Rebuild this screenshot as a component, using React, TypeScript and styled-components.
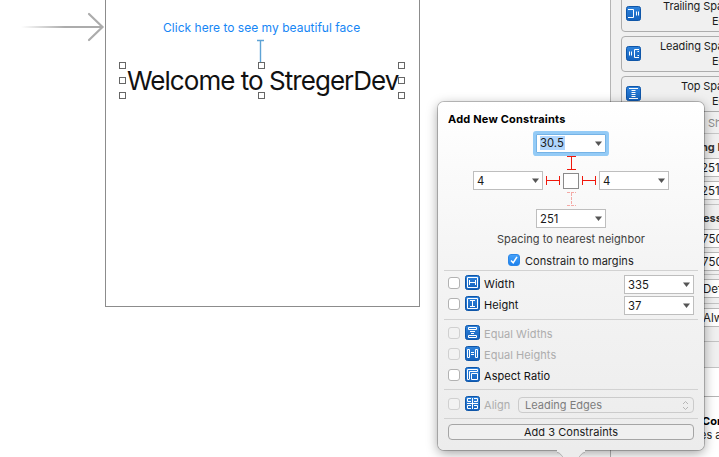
import React from 'react';
import styled, { createGlobalStyle, css } from 'styled-components';

const Global = createGlobalStyle`
  *, *::before, *::after { box-sizing: border-box; }
  body { margin: 0; background: #fff; font-family: Inter, "Liberation Sans", sans-serif; font-size: 11px; color: #1c1c1c; overflow: hidden; }
`;

const Window = styled.div`
  position: relative;
  display: grid;
  grid-template-columns: 610px 109px;
  width: 719px;
  height: 457px;
  overflow: hidden;
  background: #fff;
`;

/* ---------- interface builder canvas ---------- */
const Canvas = styled.main`
  position: relative;
`;
const Scene = styled.section`
  position: absolute;
  left: 105px;
  top: -2px;
  width: 315px;
  height: 309px;
  border: 1px solid #8c8c8c;
`;
const EntryArrow = styled.svg`
  position: absolute;
  left: 20px;
  top: 10px;
`;
const LinkLabel = styled.span`
  position: absolute;
  left: 163px;
  top: 19px;
  line-height: 17px;
  font-size: 12px;
  letter-spacing: 0.02px;
  white-space: nowrap;
  color: #1686f5;
`;
const Headline = styled.h1`
  position: absolute;
  left: 127px;
  top: 64px;
  margin: 0;
  line-height: 34px;
  font-size: 26px;
  font-weight: 400;
  letter-spacing: -0.96px;
  white-space: nowrap;
  color: #111;
`;
const Overlay = styled.svg`
  position: absolute;
  left: 110px;
  top: 36px;
`;

/* ---------- inspector ---------- */
const Inspector = styled.aside`
  display: flex;
  flex-direction: column;
  border-left: 1px solid #b4b4b4;
  background: #fff;
  overflow: hidden;
`;
const Cards = styled.div`
  flex: none;
  height: 134px;
  padding-left: 10px;
  background: #f0f0f0;
  border-bottom: 1px solid #c6c6c6;
`;
const Card = styled.div<{ $first?: boolean }>`
  display: flex;
  width: 130px;
  height: ${p => (p.$first ? 40 : 36)}px;
  margin-top: ${p => (p.$first ? -8 : 4)}px;
  padding: ${p => (p.$first ? 13 : 9)}px 0 0 4px;
  border: 1px solid #adadad;
  border-radius: 4px;
`;
const CardText = styled.div`
  flex: 1;
  margin-top: -7px;
  line-height: 15px;
  white-space: nowrap;
`;
const CardTitle = styled.div<{ $start: number }>`
  margin-left: ${p => p.$start}px;
  letter-spacing: -0.1px;
`;
const CardSub = styled.div`
  margin-left: 71px;
`;
const ShowNote = styled.div`
  margin: 3px 0 0 87px;
  line-height: 16px;
  color: #8b8b8b;
  white-space: nowrap;
`;
const Group = styled.div<{ $h: number }>`
  flex: none;
  height: ${p => p.$h}px;
  padding-left: 80px;
  background: #f0f0f0;
  border-bottom: 1px solid #c3c3c3;
  overflow: hidden;
`;
const GroupTitle = styled.div<{ $x: number }>`
  height: 24px;
  line-height: 27px;
  margin-left: ${p => p.$x}px;
  font-weight: 700;
  white-space: nowrap;
  color: #333;
`;
const Field = styled.div<{ $top?: number; $pad: number }>`
  height: 19px;
  width: 80px;
  margin-top: ${p => p.$top ?? 0}px;
  padding-left: ${p => p.$pad}px;
  line-height: 18px;
  font-size: 11.5px;
  background: #fff;
  border: 1px solid #b9b9b9;
  white-space: nowrap;
`;
const Library = styled.div`
  flex: 1;
  padding: 17px 0 0 89px;
  line-height: 14px;
  white-space: nowrap;
`;
const LibraryTabs = styled.div`
  flex: none;
  height: 29px;
  border-bottom: 1px solid #b4b4b4;
`;
const Bold = styled.div`
  margin-left: 2px;
  font-weight: 700;
  color: #000;
`;

/* ---------- popover ---------- */
const Popover = styled.div`
  position: absolute;
  left: 438px;
  top: 102px;
  width: 266px;
  height: 348px;
  padding: 9px 6px 0;
  border-radius: 6px;
  background: linear-gradient(#fff 0, #fbfbfb 18%, #f4f4f4 48%, #ececec 100%);
  box-shadow: 0 0 0 1px rgba(0, 0, 0, 0.22), 0 3px 12px rgba(0, 0, 0, 0.38);
`;
const Tail = styled.svg`
  position: absolute;
  left: 119px;
  top: 347px;
`;
const Title = styled.div`
  height: 21px;
  padding-left: 4px;
  line-height: 17px;
  font-weight: 700;
  letter-spacing: 0.2px;
  color: #000;
`;
const Spacing = styled.div`
  display: grid;
  grid-template-columns: 70px 20px 16px 20px 70px;
  grid-template-rows: 22px 17px 19px 18px 21px;
  justify-content: center;
  align-items: center;
  justify-items: center;
  height: 99px;
`;
const Middle = styled.div`
  grid-column: 1 / -1;
  display: flex;
  justify-content: center;
`;
const Combo = styled.div<{ $focus?: boolean }>`
  display: flex;
  flex: none;
  align-items: center;
  justify-content: space-between;
  width: 70px;
  height: 19px;
  padding: 0 3px;
  border: 1px solid #bebebe;
  background: #fff;
  font-size: 11.3px;
  color: #1a1a1a;
  ${p => p.$focus && css`
    border-color: #75b3e6;
    box-shadow: 0 0 0 3px #94cbf6;
    border-radius: 1px;
  `}
`;
const Value = styled.span<{ $selected?: boolean }>`
  line-height: 14px;
  padding-right: 1px;
  background: ${p => (p.$selected ? '#b0d5fc' : 'transparent')};
`;
const Caption = styled.div`
  height: 20px;
  line-height: 16px;
  text-align: center;
  letter-spacing: 0.04px;
  color: #3f3f3f;
`;
const MarginRow = styled.div`
  display: flex;
  align-items: center;
  gap: 5px;
  height: 19px;
  padding-left: 64px;
`;
const Box = styled.span<{ $dim?: boolean; $on?: boolean }>`
  display: flex;
  flex: none;
  width: 12px;
  height: 12px;
  margin-top: ${p => (p.$on ? -1 : 1)}px;
  border: 1px solid ${p => (p.$on ? '#2b87e8' : p.$dim ? '#d0d0d0' : '#b2b2b2')};
  border-radius: 3px;
  background: ${p => (p.$on ? 'linear-gradient(#45a0f8, #1e82ed)' : p.$dim ? '#f2f2f2' : '#fff')};
`;
const Section = styled.div<{ $h: number; $top: number }>`
  height: ${p => p.$h}px;
  padding: ${p => p.$top}px 4px 0;
  border-top: 1px solid #d2d2d2;
`;
const Label = styled.span`
  flex: 1;
  letter-spacing: 0.05px;
  white-space: nowrap;
`;
const Row = styled.div<{ $dim?: boolean }>`
  display: flex;
  align-items: center;
  height: 21px;
  color: ${p => (p.$dim ? '#adadad' : '#111')};

  ${Label} { margin-top: 3px; }
  ${Combo} { margin-top: 4px; }
`;
const RowIcon = styled.svg`
  flex: none;
  width: 15px;
  height: 15px;
  margin: 0 4px 0 5px;
`;
const CardIcon = styled.svg`
  flex: none;
  width: 15px;
  height: 15px;
`;
const Select = styled.div`
  display: flex;
  align-items: center;
  justify-content: space-between;
  width: 176px;
  height: 16px;
  margin-top: 3px;
  padding: 0 4px 0 6px;
  border: 1px solid #cbcbcb;
  border-radius: 4px;
  color: #7d7d7d;
`;
const AddButton = styled.button`
  display: block;
  width: 246px;
  height: 16px;
  padding: 0;
  border: 1px solid #a5a5a5;
  border-radius: 4px;
  background: #f0f0f0;
  font: inherit;
  line-height: 14px;
  letter-spacing: 0.05px;
  color: #1a1a1a;
`;

const glyphs = {
  width: <path d="M2.5 2.5h10v10h-10zM4.5 5v5M10.5 5v5M4.5 7.5h6" />,
  height: <path d="M2.5 2.5h10v10h-10zM5 4.5h5M5 10.5h5M7.5 4.5v6" />,
  equalWidths: <path d="M3.5 2.5h8v2h-8zM3.5 10.5h8v2h-8zM5 6.5h5M6 8.5h3" />,
  equalHeights: <path d="M2.5 3.500h2v8h-2zM10.500 3.500h2v8h-2zM6 6.500h3M6 8.500h3" />,
  aspect: <path d="M12.500 4.500v-2h-10v10h2M6.500 6.500h6v6h-6zM4.500 12v-7.500h8" />,
  align: <path d="M7.500 2v11M2 7.500h11M6 2.500h-3.500v3h3.500M6 9.500h-3.500v3h3.500M9 2.500h3.500v3h-3.500M9 9.500h3.500v3h-3.500" />,
  trailing: <path d="M2 3.5h5.5v8H2M10.5 5.5v4M12.5 5.5v4" />,
  leading: <path d="M13 3.5H8.5v8H13M11.5 5.5h1.500M11.500 9.500h1.500M3.500 5.500v4M5.500 5.500v4" />,
  top: <path d="M3 2.5h9M3 12.5h9M5.5 4.5h4M5.5 6.5h4M5.5 8.5h4M5.5 10.5h4" />,
};
type GlyphName = keyof typeof glyphs;

const Glyph = ({ name }: { name: GlyphName }) => (
  <>
    <defs>
      <linearGradient id={`blue-${name}`} x2="0" y2="1">
        <stop stopColor="#2f83dc" />
        <stop offset="1" stopColor="#1462bd" />
      </linearGradient>
    </defs>
    <rect x=".5" y=".5" width="14" height="14" rx="2" fill={`url(#blue-${name})`} stroke="#0f56a8" />
    <g fill="none" stroke="#fff" strokeWidth="1">{glyphs[name]}</g>
  </>
);

const ComboBox = ({ value, focus }: { value: string; focus?: boolean }) => (
  <Combo $focus={focus}>
    <Value $selected={focus}>{value}</Value>
    <svg width="7" height="5"><path d="M0 .5h7L3.5 5z" fill="#555" /></svg>
  </Combo>
);

const VerticalStrut = ({ dashed }: { dashed?: boolean }) => (
  <svg width="9" height="14">
    <path d="M0 .5h9M0 13.5h9M4.5 1v12" stroke={dashed ? '#f4aaa6' : '#f0180c'} strokeDasharray={dashed ? '3 1' : undefined} />
  </svg>
);
const HorizontalStrut = () => (
  <svg width="14" height="9"><path d="M.5 0v9M13.5 0v9M1 4.5h12" stroke="#f0180c" /></svg>
);

const OptionRow = ({ icon, label, dim, value }: { icon: GlyphName; label: string; dim?: boolean; value?: string }) => (
  <Row $dim={dim}>
    <Box $dim={dim} />
    <RowIcon viewBox="0 0 15 15"><Glyph name={icon} /></RowIcon>
    <Label>{label}</Label>
    {value && <ComboBox value={value} />}
  </Row>
);

const InspectorCard = ({ icon, title, start, first }: { icon: GlyphName; title: string; start: number; first?: boolean }) => (
  <Card $first={first}>
    <CardIcon viewBox="0 0 15 15"><Glyph name={icon} /></CardIcon>
    <CardText>
      <CardTitle $start={start}>{title}</CardTitle>
      <CardSub>Eq</CardSub>
    </CardText>
  </Card>
);

const handles = [[119, 62], [258, 62], [398, 62], [119, 77], [398, 77], [119, 92], [258, 92], [398, 92]];

export default function App() {
  return (
    <>
      <Global />
      <Window>
        <Canvas>
          <Scene />
          <EntryArrow width="86" height="34">
            <defs>
              <linearGradient id="fade" gradientUnits="userSpaceOnUse" x1="1" x2="45" y1="0" y2="0">
                <stop stopColor="#acacac" stopOpacity="0" />
                <stop offset="1" stopColor="#acacac" />
              </linearGradient>
            </defs>
            <path d="M1 16H82V18H1Z" fill="url(#fade)" />
            <path d="M69 4L82.500 17L69 30" fill="none" stroke="#acacac" strokeWidth="2.200" strokeLinecap="round" />
          </EntryArrow>
          <LinkLabel>Click here to see my beautiful face</LinkLabel>
          <Headline>Welcome to StregerDev</Headline>
          <Overlay width="300" height="64" viewBox="110 36 300 64">
            <path d="M257 40.500h7M260.500 41v22" stroke="#5ea3d5" strokeWidth="1.400" fill="none" />
            {handles.map(([x, y]) => (
              <rect key={`${x}-${y}`} x={x + 0.5} y={y + 0.5} width="6" height="6" fill="#fff" stroke="#666" />
            ))}
          </Overlay>
        </Canvas>

        <Inspector>
          <Cards>
            <InspectorCard first icon="trailing" title="Trailing Spa" start={22} />
            <InspectorCard icon="leading" title="Leading Spa" start={19} />
            <InspectorCard icon="top" title="Top Spa" start={40} />
            <ShowNote>Sh</ShowNote>
          </Cards>
          <Group $h={71}>
            <GroupTitle $x={10}>ng P</GroupTitle>
            <Field $pad={9}>251</Field>
            <Field $top={4} $pad={9}>251</Field>
          </Group>
          <Group $h={70}>
            <GroupTitle $x={12}>ess</GroupTitle>
            <Field $pad={10}>750</Field>
            <Field $top={4} $pad={10}>750</Field>
          </Group>
          <Group $h={29}>
            <Field $top={4} $pad={11}>Def</Field>
          </Group>
          <Group $h={38}>
            <Field $top={4} $pad={11}>Alw</Field>
          </Group>
          <Group $h={26} />
          <LibraryTabs />
          <Library>
            <Bold>Con</Bold>
            <div>es a</div>
          </Library>
        </Inspector>

        <Popover>
          <Tail width="28" height="10">
            <path d="M0 0V3C4 3 5 9 9 10H19C23 9 24 3 28 3V0Z" fill="#ececec" />
            <path d="M0 3.500C4 3.500 5 9 9 10M28 3.500C24 3.500 23 9 19 10" fill="none" stroke="#aaa" />
          </Tail>
          <Title>Add New Constraints</Title>
          <Spacing>
            <Middle><ComboBox value="30.5" focus /></Middle>
            <Middle><VerticalStrut /></Middle>
            <ComboBox value="4" />
            <HorizontalStrut />
            <svg width="16" height="16"><rect x=".5" y=".5" width="15" height="15" fill="#fff" stroke="#8a8a8a" /></svg>
            <HorizontalStrut />
            <ComboBox value="4" />
            <Middle><VerticalStrut dashed /></Middle>
            <Middle><ComboBox value="251" /></Middle>
          </Spacing>
          <Caption>Spacing to nearest neighbor</Caption>
          <MarginRow>
            <Box $on>
              <svg width="10" height="10"><path d="M2 5.500L4.200 7.700L8 1.800" fill="none" stroke="#fff" strokeWidth="1.500" /></svg>
            </Box>
            <Label>Constrain to margins</Label>
          </MarginRow>
          <Section $h={49} $top={1}>
            <OptionRow icon="width" label="Width" value="335" />
            <OptionRow icon="height" label="Height" value="37" />
          </Section>
          <Section $h={70} $top={2}>
            <OptionRow dim icon="equalWidths" label="Equal Widths" />
            <OptionRow dim icon="equalHeights" label="Equal Heights" />
            <OptionRow icon="aspect" label="Aspect Ratio" />
          </Section>
          <Section $h={29} $top={3}>
            <Row $dim>
              <Box $dim />
              <RowIcon viewBox="0 0 15 15"><Glyph name="align" /></RowIcon>
              <Label>Align</Label>
              <Select>
                Leading Edges
                <svg width="7" height="11"><path d="M1 4L3.500 1.500L6 4M1 7L3.500 9.500L6 7" fill="none" stroke="#b5b5b5" /></svg>
              </Select>
            </Row>
          </Section>
          <Section $h={32} $top={5}>
            <AddButton>Add 3 Constraints</AddButton>
          </Section>
        </Popover>
      </Window>
    </>
  );
}
